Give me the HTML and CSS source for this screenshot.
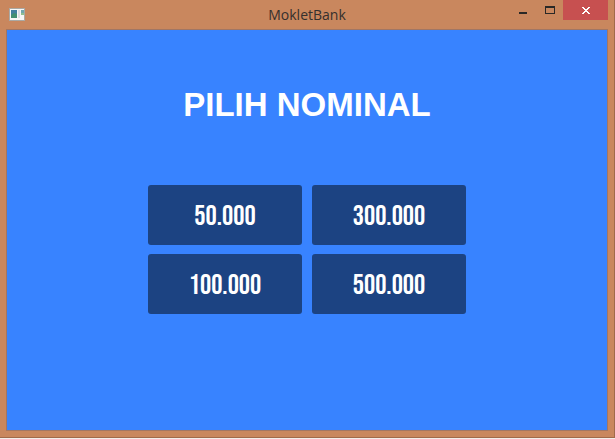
FILE: index.html
```
<!DOCTYPE html>
<html lang="id">
<head>
<meta charset="utf-8">
<title>MokletBank</title>
<link rel="stylesheet" href="styles.css">
</head>
<body>
<div class="window">
  <header class="titlebar">
    <svg class="app-icon" width="16" height="13" viewBox="0 0 16 13" aria-hidden="true">
      <rect width="16" height="13" fill="#aaa9a4"/>
      <rect x="1" y="1" width="14" height="11" fill="#f7f7f7"/>
      <rect x="2" y="2" width="6" height="8" fill="#427f9f"/>
      <path d="M2 7l3-2 3 1v4H2z" fill="#438f72"/>
      <rect x="9" y="2" width="2" height="8" fill="#dedde3"/>
      <rect x="12" y="2" width="3" height="4" fill="#72a6ad"/>
      <rect x="12" y="5" width="3" height="2" fill="#8fbf90"/>
    </svg>
    <h1 class="window-title">MokletBank</h1>
    <div class="controls">
      <button class="control" type="button" aria-label="Minimize">
        <svg width="8" height="12" viewBox="0 0 8 12"><path d="M0 8h8v2H0z" fill="#2a2826"/></svg>
      </button>
      <button class="control" type="button" aria-label="Maximize">
        <svg width="10" height="8" viewBox="0 0 10 8" shape-rendering="crispEdges"><path fill-rule="evenodd" d="M0 0h10v8H0zM1 2v5h8V2z" fill="#2a2826"/></svg>
      </button>
      <button class="control close" type="button" aria-label="Close">
        <svg width="8" height="7" viewBox="0 0 8 7" shape-rendering="crispEdges"><path d="M0 0h2v1h1v1h2V1h1V0h2v1H7v1H6v1H5v1h1v1h1v1h1v1H6V6H5V5H3v1H2v1H0V6h1V5h1V4h1V3H2V2H1V1H0z" fill="#fff"/></svg>
      </button>
    </div>
  </header>
  <main class="content">
    <h2 class="heading">PILIH NOMINAL</h2>
    <div class="amounts">
      <button class="amount" type="button">50.000</button>
      <button class="amount" type="button">300.000</button>
      <button class="amount" type="button">100.000</button>
      <button class="amount" type="button">500.000</button>
    </div>
  </main>
</div>
</body>
</html>
```
FILE: styles.css
```
* {
  box-sizing: border-box;
}

body {
  margin: 0;
  padding-bottom: 1px;
  background: #f3eeeb;
}

.window {
  display: flex;
  flex-direction: column;
  min-height: calc(100vh - 1px);
  padding: 0 6px 6px;
  background: #c9875e;
  border: solid #a06a4b;
  border-width: 0 1px 1px 0;
}

.titlebar {
  display: grid;
  grid-template-columns: 1fr auto 1fr;
  height: 29px;
}

.app-icon {
  margin: 8px 0 0 3px;
}

.window-title {
  margin: 0;
  color: #35302d;
  font: 400 14px/30px "Open Sans", "Noto Sans", sans-serif;
}

.controls {
  display: flex;
  justify-content: flex-end;
  align-items: flex-start;
}

.control {
  display: flex;
  align-items: center;
  justify-content: center;
  width: 27px;
  height: 20px;
  padding: 0;
  border: 0;
  background: transparent;
}

.close {
  width: 45px;
  background: #c75050;
}

.content {
  flex: 1;
  display: flex;
  flex-direction: column;
  align-items: center;
  padding: 55px 16px 16px;
  background: #3883ff;
  border: 1px solid #a27663;
}

.heading {
  margin: 0 0 60px;
  color: #fff;
  font: 700 33px/40px "Liberation Sans", Arial, sans-serif;
}

.amounts {
  display: grid;
  grid-template-columns: repeat(2, 154px);
  gap: 9px 10px;
}

.amount {
  height: 60px;
  padding: 4px 0 0;
  border: 0;
  border-radius: 3px;
  background: #1c4382;
  color: #fff;
  font: 400 28px/30px "Bebas Neue", "Liberation Sans Narrow", "Arial Narrow", sans-serif;
}
```
